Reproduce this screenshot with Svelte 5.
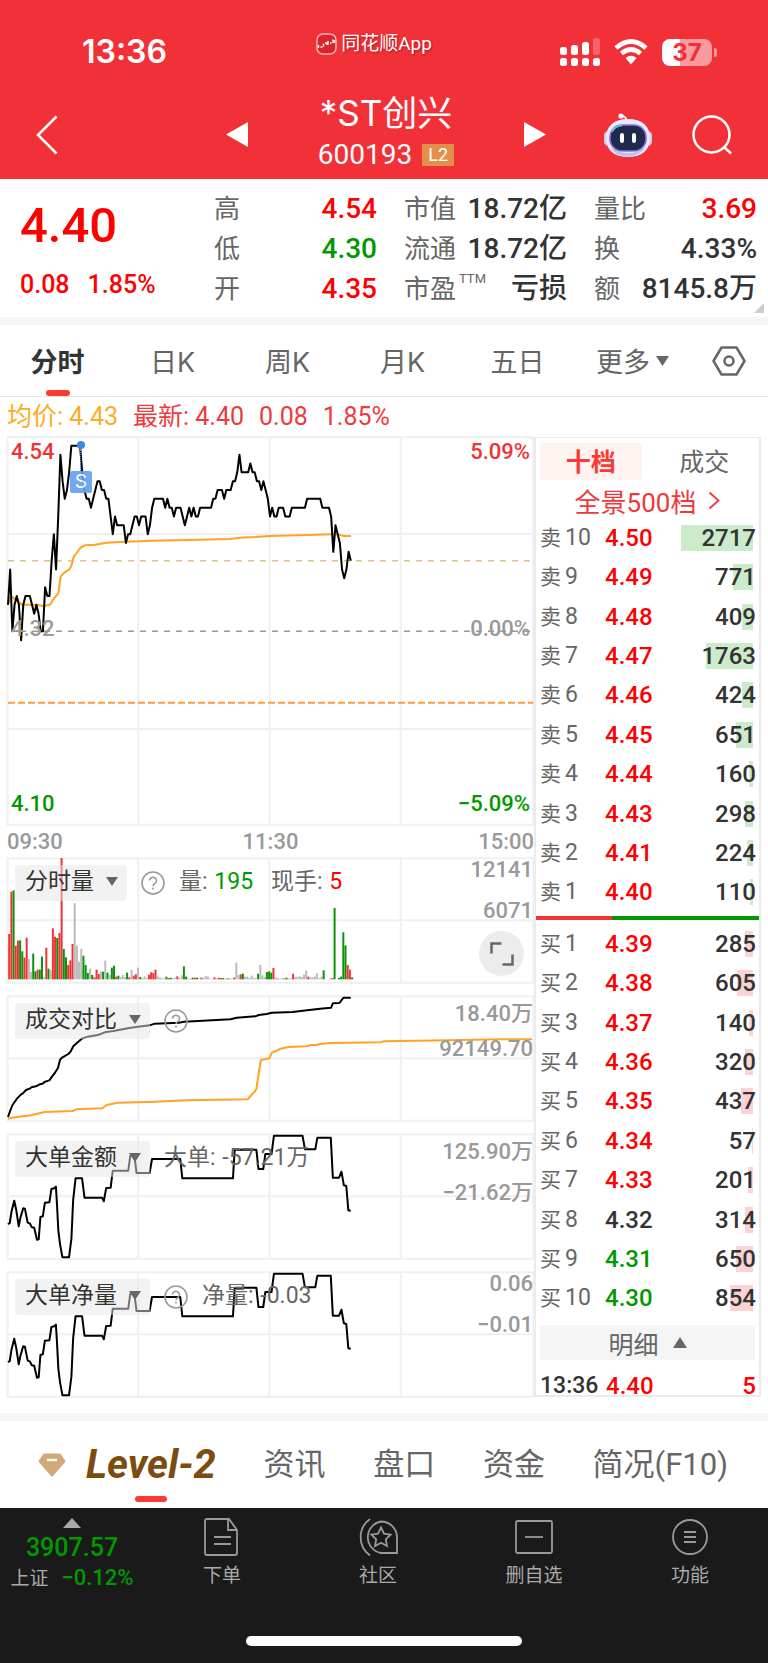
<script>
  const stats = [
    [
      { label: '高', value: '4.54', tone: 'up' },
      { label: '低', value: '4.30', tone: 'down' },
      { label: '开', value: '4.35', tone: 'up' }
    ],
    [
      { label: '市值', value: '18.72亿' },
      { label: '流通', value: '18.72亿' },
      { label: '市盈', sup: 'TTM', value: '亏损' }
    ],
    [
      { label: '量比', value: '3.69', tone: 'up' },
      { label: '换', value: '4.33%' },
      { label: '额', value: '8145.8万' }
    ]
  ];

  const periods = ['分时', '日K', '周K', '月K', '五日'];

  const asks = [
    ['10', '4.50', 2717], ['9', '4.49', 771], ['8', '4.48', 409], ['7', '4.47', 1763],
    ['6', '4.46', 424], ['5', '4.45', 651], ['4', '4.44', 160], ['3', '4.43', 298],
    ['2', '4.41', 224], ['1', '4.40', 110]
  ];
  const bids = [
    ['1', '4.39', 285], ['2', '4.38', 605], ['3', '4.37', 140], ['4', '4.36', 320],
    ['5', '4.35', 437], ['6', '4.34', 57], ['7', '4.33', 201], ['8', '4.32', 314],
    ['9', '4.31', 650], ['10', '4.30', 854]
  ];
  const previousClose = 4.32;
  const largest = 2717;
  const toneOf = (price) =>
    Number(price) > previousClose ? 'up' : Number(price) < previousClose ? 'down' : '';

  // Minute index and price in cents above 4.00.
  const priceTicks =
    '0,35 1,39 2,32 3,35 4,36 5,35 6,31 7,35 8,36 10,36 11,35 12,34 13,35 14,34 15,32 16,32 17,37 18,36 19,36 20,40 21,43 22,39 23,45 24,52 25,49 26,47 27,48 28,50 29,53 33,53 34,50 35,48 36,47 37,47 38,46 39,47 40,48 41,49 42,49 43,48 44,48 45,47 46,47 47,45 48,43 49,45 50,44 53,44 54,42 55,43 56,43 57,44 58,45 59,45 60,44 61,45 63,45 64,43 65,44 66,46 67,47 71,47 72,46 73,47 74,46 75,46 76,45 77,46 79,46 80,45 81,44 82,45 83,46 84,45 85,46 86,45 87,45 88,46 93,46 94,47 95,47 96,48 98,48 99,47 100,48 102,48 103,49 104,49 105,50 106,52 107,50 110,50 111,51 112,50 113,50 114,49 115,49 116,48 117,49 118,48 119,47 120,45 121,46 122,45 123,45 124,46 126,46 127,45 129,45 130,46 136,46 137,47 143,47 144,46 147,46 148,45 149,41 150,44 151,43 152,42 153,39 154,38 155,39 156,41 157,40';
  const priceLine = priceTicks
    .split(' ')
    .map((pair) => {
      const [minute, cents] = pair.split(',').map(Number);
      return `${24 + minute * 6.55},${604 - (cents - 32) * 26.5}`;
    })
    .join(' ');

  const averageLine =
    '24,522 36,500 50,512 66,524 110,524 130,528 150,524 163,504 175,490 182,440 190,430 208,418 214,408 221,380 232,366 242,353 254,346 285,344 320,338 375,335 460,332 560,330 690,327 720,323 765,321 809,318 900,316 1000,313 1015,313 1030,318 1053,318';

  // Per-minute turnover: r = rising, g = falling, y = flat.
  const volumeBars =
    'r136 r263 g267 r101 r116 g117 g84 r65 r125 y61 y22 g77 g24 r29 g29 g68 y7 r95 g32 y27 r153 r128 g124 r139 r364 g91 g66 r43 r57 r106 y229 y101 y53 y92 g71 g43 g19 y32 g13 r6 r29 r16 y23 g23 y56 g20 y13 g35 g41 r8 g11 y7 y13 y7 g20 r6 y29 r11 r15 y35 g7 y4 y9 y5 r14 r21 r19 r29 y9 y6 y3 y3 g8 r4 g5 y3 y5 r9 y4 y12 g39 g8 y3 y2 g5 r5 g5 y2 r5 y5 y10 y8 y2 y2 r6 y3 r5 r4 g4 y2 g3 y3 y2 r5 y50 y13 r15 g17 y8 y8 y5 y11 y5 y3 g17 y43 y12 y7 g22 g24 g20 r34 y6 r2 y2 y3 r3 g5 y3 y3 r17 y7 y8 y9 y7 y14 y26 r8 y6 y6 y8 y18 y3 y8 g27 y0 y0 y3 r4 g214 y0 g4 g8 g141 g102 r43 r29 g6'
      .split(' ')
      .map((bar, i) => ({ kind: bar[0], height: Number(bar.slice(1)), x: 24.5 + i * 6.34 }));

  const totalToday =
    '24,800 30,782 37,764 50,745 62,732 67,729 76,719 87,715 92,711 105,708 116,702 124,700 132,694 144,690 150,681 161,666 169,653 175,628 182,621 199,611 206,603 214,587 224,578 238,565 255,559 285,554 305,546 330,542 380,532 435,525 450,520 520,517 535,514 590,511 670,507 688,502 742,498 752,494 775,491 790,487 850,485 880,481 930,475 962,472 967,459 986,458 998,442 1019,442';
  const totalYesterday =
    '24,805 35,802 90,795 130,785 212,782 222,777 298,774 310,764 342,757 450,754 545,750 720,747 728,737 740,724 745,716 758,629 783,624 790,607 808,599 815,595 838,590 890,588 905,584 920,584 930,581 960,578 1105,576 1115,573 1300,570 1450,567 1545,567';
  const largeOrders =
    '24,312 29,308 34,274 42,241 48,270 55,318 60,292 68,264 73,265 81,307 87,309 93,321 100,322 108,358 113,357 118,290 125,288 131,247 144,246 150,206 158,204 163,199 166,250 170,330 175,372 182,411 201,411 208,355 213,240 220,174 239,174 246,232 297,232 302,243 309,203 322,202 328,151 373,151 379,106 391,107 397,158 435,158 442,116 524,116 530,174 677,174 682,88 745,88 751,146 765,146 771,101 789,101 796,46 879,46 886,87 916,87 922,52 961,52 967,172 985,172 992,154 999,195 1006,197 1012,270 1019,271';

  const panels = [
    {
      name: '分时量', help: true, origin: 25, kind: 'volume', axis: ['12141', '6071'],
      readings: [{ label: '量:', value: '195', tone: 'down' }, { label: '现手:', value: '5', tone: 'up' }]
    },
    { name: '成交对比', help: true, origin: 437, kind: 'compare', axis: ['18.40万', '92149.70'], readings: [] },
    {
      name: '大单金额', help: false, origin: 41, kind: 'orders', axis: ['125.90万', '−21.62万'],
      readings: [{ label: '大单:', value: '-57.21万' }]
    },
    {
      name: '大单净量', help: true, origin: 41, kind: 'orders', axis: ['0.06', '−0.01'],
      readings: [{ label: '净量:', value: '-0.03' }]
    }
  ];
</script>

{#snippet rows(side, levels, barClass)}
  <table aria-label={side}>
    <tbody>
      {#each levels as [level, price, size]}
        <tr>
          <th scope="row"><span>{side}</span>{level}</th>
          <td class="price {toneOf(price)}">{price}</td>
          <td class="size">
            <i class={barClass} style="width: {(size / largest) * 72}%"></i>
            <b>{size}</b>
          </td>
        </tr>
      {/each}
    </tbody>
  </table>
{/snippet}

<div class="app">
  <header>
    <div class="status">
      <div class="clock">13:36</div>
      <div class="source">
        <svg width="21" height="22" viewBox="0 0 21 22" aria-hidden="true">
          <rect x="1" y="1" width="19" height="20" rx="6" fill="#d9252b" stroke="#fff" stroke-opacity=".65" stroke-width="1.5" />
          <path d="M2.5 12v3M4.5 14h2M7.5 10.500v3M9 10h2v2M12 8v4M14 10h1.500M17 6.500v3.500M18.500 7v3" stroke="#fff" stroke-width="1.400" fill="none" />
        </svg>
        <span>同花顺App</span>
      </div>
      <div class="signals">
        <svg width="40" height="28" viewBox="0 0 40 28" fill="#fff" aria-hidden="true">
          <rect x="0" y="9" width="7" height="8" rx="2.500" />
          <rect x="11" y="7" width="7" height="10" rx="2.500" />
          <rect x="22" y="4" width="7" height="13" rx="2.500" />
          <rect x="33" y="0" width="7" height="17" rx="2.500" opacity=".25" />
          <rect x="0" y="20" width="7" height="8" rx="2.500" />
          <rect x="11" y="20" width="7" height="8" rx="2.500" />
          <rect x="22" y="20" width="7" height="8" rx="2.500" />
          <rect x="33" y="20" width="7" height="8" rx="2.500" />
        </svg>
        <svg width="34" height="26" viewBox="0 0 34 26" aria-hidden="true">
          <path d="M2 9Q17-4 32 9M7.500 14.500Q17 6.500 26.500 14.500" fill="none" stroke="#fff" stroke-width="4.600" />
          <path d="M11.500 19Q17 14.500 22.500 19L17 25.500Z" fill="#fff" />
        </svg>
        <div class="battery"><span>37</span></div>
      </div>
    </div>
    <div class="titlebar">
      <button class="back" aria-label="返回">
        <svg width="22" height="40" viewBox="0 0 22 40"><path d="M20.500 1.500L2 20l18.500 18.500" fill="none" stroke="#fff" stroke-width="2.500" /></svg>
      </button>
      <button class="prev" aria-label="上一只">
        <svg width="22" height="25" viewBox="0 0 22 25"><path d="M22 0v25L0 12.500Z" fill="#fff" /></svg>
      </button>
      <div class="name">
        <h1>*ST创兴</h1>
        <div class="code">600193<span>L2</span></div>
      </div>
      <button class="next" aria-label="下一只">
        <svg width="22" height="25" viewBox="0 0 22 25"><path d="M0 0v25l22-12.500Z" fill="#fff" /></svg>
      </button>
      <div class="tools">
        <button aria-label="智能助手">
          <svg width="48" height="44" viewBox="0 0 48 44">
            <path d="M22 8Q23 3 17 3" fill="none" stroke="#e4e4ff" stroke-width="2" />
            <circle cx="17" cy="3" r="2.600" fill="#f3f3ff" />
            <rect x="0" y="18" width="9" height="15" rx="4.500" fill="#c9cdf4" />
            <rect x="39" y="18" width="9" height="15" rx="4.500" fill="#c9cdf4" />
            <path d="M24 6C38 6 46 13 46 25S38 44 24 44 2 37 2 25 10 6 24 6Z" fill="#e9ebfc" />
            <path d="M6 34Q24 46 42 34Q36 43 24 43.500T6 34Z" fill="#bcc4ee" />
            <rect x="6" y="12" width="36" height="26" rx="12" fill="#202b4b" stroke="#8f6ee8" stroke-width="1.600" />
            <path d="M8 19Q11 13 18 12.500" fill="none" stroke="#55d4e6" stroke-width="1.500" />
            <rect x="16" y="20" width="4" height="10" rx="2" fill="#fff" />
            <rect x="28" y="20" width="4" height="10" rx="2" fill="#fff" />
          </svg>
        </button>
        <button aria-label="搜索">
          <svg width="40" height="40" viewBox="0 0 40 40" fill="none" stroke="#fff" stroke-width="2.500">
            <circle cx="19.500" cy="19.500" r="18" /><path d="M32 32l7 6.500" />
          </svg>
        </button>
      </div>
    </div>
  </header>

  <section class="quote" aria-label="行情">
    <div class="last up">
      <strong>4.40</strong>
      <div><span>0.08</span><span>1.85%</span></div>
    </div>
    {#each stats as column}
      <dl>
        {#each column as item}
          <div>
            <dt>{item.label}{#if item.sup}<sup>{item.sup}</sup>{/if}</dt>
            <dd class={item.tone}>{item.value}</dd>
          </div>
        {/each}
      </dl>
    {/each}
    <i class="corner"></i>
  </section>

  <nav class="periods" aria-label="周期">
    {#each periods as period, i}
      <button class:active={i === 0}>{period}</button>
    {/each}
    <button>更多<svg width="13" height="10" viewBox="0 0 13 10"><path d="M0 0h13L6.500 10Z" fill="#666" /></svg></button>
    <button aria-label="设置">
      <svg width="34" height="30" viewBox="0 0 34 30" fill="none" stroke="#666" stroke-width="2.500">
        <path d="M9.500 1.500h15L32.500 15l-8 13.500h-15L1.500 15Z" stroke-linejoin="round" /><circle cx="17" cy="15" r="4.500" />
      </svg>
    </button>
  </nav>

  <main>
    <p class="summary"><span class="avg">均价: 4.43</span><span>最新: 4.40</span><span>0.08</span><span>1.85%</span></p>
    <div class="board">
      <div class="charts">
        <div class="chart main-chart">
          <svg viewBox="21 21 1581 1164" preserveAspectRatio="none" aria-hidden="true">
            <path class="grid" d="M23 22H1599V1184H23ZM415 22V1184M809 22V1184M1202 22V1184M23 312H1599M23 897H1599" />
            <path class="dash tan" d="M24 392H1600" />
            <path class="dash gray" d="M60 604H1600" />
            <path class="dash orange" d="M24 818H1600" />
            <polyline class="line amber" points={averageLine} />
            <polyline class="line" points={priceLine} />
          </svg>
          <div class="marker"><i></i><span>S</span></div>
          <span class="corner-label up tl">4.54</span>
          <span class="corner-label up tr">5.09%</span>
          <span class="corner-label mid ml">4.32</span>
          <span class="corner-label mid mr">0.00%</span>
          <span class="corner-label down bl">4.10</span>
          <span class="corner-label down br">−5.09%</span>
        </div>
        <div class="times"><span>09:30</span><span>11:30</span><span>15:00</span></div>

        <div class="panels">
          {#each panels as panel}
            <section class="chart panel" aria-label={panel.name}>
              <svg class="plot" viewBox="21 {panel.origin} 1530 375" preserveAspectRatio="none" aria-hidden="true">
                <path class="grid" transform="translate(0 {panel.origin})" d="M23 1H1549V374H23ZM402 1V374M783 1V374M1164 1V374M23 187H1549" />
                {#if panel.kind === 'volume'}
                  {#each volumeBars as bar}
                    <rect class="bar-{bar.kind}" x={bar.x} y={389 - bar.height} width="5.800" height={bar.height} />
                  {/each}
                {:else if panel.kind === 'compare'}
                  <polyline class="line amber" points={totalYesterday} />
                  <polyline class="line" points={totalToday} />
                {:else}
                  <polyline class="line" points={largeOrders} />
                {/if}
              </svg>
              <div class="panel-head">
                <button class="pick">{panel.name}<svg width="12" height="9" viewBox="0 0 12 9"><path d="M0 0h12L6 9Z" fill="#666" /></svg></button>
                {#if panel.help}
                  <button class="help" aria-label="说明">
                    <svg width="24" height="24" viewBox="0 0 24 24" fill="none" stroke="#999" stroke-width="1.600">
                      <circle cx="12" cy="12" r="11" />
                      <path d="M8.500 9.500a3.500 3.300 0 1 1 5.500 2.800c-1.400.9-2 1.300-2 2.700" /><path d="M12 16.500v2" />
                    </svg>
                  </button>
                {/if}
                {#each panel.readings as r}
                  <span class="reading">{r.label} <b class={r.tone}>{r.value}</b></span>
                {/each}
              </div>
              <div class="axis" class:tall={panel.axis[0].endsWith('万')}>
                {#each panel.axis as tick}<span class:wan={tick.endsWith('万')}>{tick}</span>{/each}
              </div>
              {#if panel.kind === 'volume'}
                <button class="expand" aria-label="全屏">
                  <svg width="24" height="24" viewBox="0 0 24 24" fill="none" stroke="#666" stroke-width="2.500"><path d="M1.500 11.500v-10h10M22.500 12.500v10h-10" /></svg>
                </button>
              {/if}
            </section>
          {/each}
        </div>
      </div>

      <aside class="book" aria-label="盘口">
        <div class="book-tabs"><button class="active">十档</button><button>成交</button></div>
        <a class="full" href="#depth">全景500档<svg width="12" height="19" viewBox="0 0 12 19"><path d="M1.500 1.500l9 8-9 8" fill="none" stroke="#f0373a" stroke-width="1.800" /></svg></a>
        {@render rows('卖', asks, 'ask')}
        <div class="ratio"><i></i></div>
        {@render rows('买', bids, 'bid')}
        <button class="detail">明细<svg width="14" height="11" viewBox="0 0 14 11"><path d="M0 11h14L7 0Z" fill="#666" /></svg></button>
        <div class="trade"><span>13:36</span><b class="up">4.40</b><b class="up">5</b></div>
      </aside>
    </div>
  </main>

  <nav class="sections" aria-label="栏目">
    <button class="level">
      <svg width="28" height="24" viewBox="0 0 28 24" aria-hidden="true">
        <path d="M7 .5h14q1 0 1.700.8L27 7.200q.8 1.100 0 2.100L15 23q-1 1-2 0L1 9.300q-.8-1 0-2.100L5.300 1.300Q6 .5 7 .5Z" fill="#cfa978" />
        <path d="M9 7h10" stroke="#fff" stroke-width="2.400" />
      </svg>
      <span>Level-2</span>
    </button>
    <button>资讯</button>
    <button>盘口</button>
    <button>资金</button>
    <button>简况(F10)</button>
  </nav>

  <footer>
    <div class="actions">
      <button class="index">
        <svg width="18" height="10" viewBox="0 0 18 10" aria-hidden="true"><path d="M0 10h18L9 0Z" fill="#aaa" /></svg>
        <strong>3907.57</strong>
        <span>上证 <em>−0.12%</em></span>
      </button>
      <button>
        <svg width="40" height="38" viewBox="0 0 40 38" aria-hidden="true"><path d="M5 1h22l8 11v23q0 2-2 2H5q-2 0-2-2V3q0-2 2-2ZM26 1v11h9M12 19h17M12 26h17" /></svg>
        下单
      </button>
      <button>
        <svg width="40" height="38" viewBox="0 0 40 38" aria-hidden="true">
          <path d="M23 3.500a16 16 0 0 1 16 16V35H23a16 16 0 0 1 0-31.500ZM12 1a22.500 22.500 0 0 0 0 36.500" />
          <path d="M23 9.500l3 6.200 6.600.9-4.800 4.700 1.200 6.700-6-3.200-6 3.200 1.200-6.700-4.800-4.700 6.600-.9Z" />
        </svg>
        社区
      </button>
      <button>
        <svg width="40" height="38" viewBox="0 0 40 38" aria-hidden="true"><rect x="2" y="3" width="36" height="32" rx="1.500" /><path d="M11 19h18" /></svg>
        删自选
      </button>
      <button>
        <svg width="40" height="38" viewBox="0 0 40 38" aria-hidden="true"><circle cx="20" cy="19" r="17" /><path d="M14 14h12M14 19h12M14 24h12" /></svg>
        功能
      </button>
    </div>
    <div class="home"></div>
  </footer>
</div>

<style>
  :global(body) { margin: 0; background: #fff; }
  .app {
    font-family: Roboto, "Noto Sans CJK SC", sans-serif;
    color: #333;
    background: #fff;
  }
  .app, .app * { box-sizing: border-box; }
  button {
    font: inherit; color: inherit; background: none; border: 0; padding: 0; margin: 0;
    display: flex; align-items: center; justify-content: center; cursor: pointer;
  }
  svg { display: block; flex: none; }
  i, em { font-style: normal; }
  .up { color: #f00; }
  .down { color: #009900; }

  header { background: #f23038; color: #fff; padding-top: 32px; }
  .status {
    display: grid; grid-template-columns: 1fr auto 1fr; align-items: center;
    height: 40px; padding: 0 56px 0 82px;
  }
  .clock { font: 600 32px/40px Inter, sans-serif; }
  .source {
    display: flex; align-items: center; gap: 4px; align-self: start; margin-right: 46px;
    font: 19px/24px Roboto, "Noto Sans CJK SC", sans-serif; text-shadow: 1px 1px 2px #7008;
  }
  .signals { display: flex; align-items: center; justify-content: flex-end; gap: 14px; }
  .battery {
    position: relative; width: 50px; height: 27px; border-radius: 8px; display: grid; place-items: center;
    background: linear-gradient(90deg, #fff 37%, #f99a9e 37%);
    font: 700 24px/27px Inter, sans-serif; color: #f23038;
  }
  .battery::after {
    content: ""; position: absolute; right: -5px; top: 9px; width: 3px; height: 9px;
    border-radius: 0 3px 3px 0; background: #f99a9e;
  }
  .titlebar {
    display: grid; grid-template-columns: 190fr 22px 276fr 22px 222fr;
    align-items: center; padding: 0 0 0 36px; height: 107px;
  }
  .titlebar > button { margin-top: 18px; }
  .back { justify-content: flex-start; }
  .name { text-align: center; padding-top: 14px; }
  h1 { margin: 0; font: 35px/44px Inter, "Noto Sans CJK SC", sans-serif; }
  .code { display: flex; align-items: center; justify-content: center; gap: 10px; font: 28px/40px Roboto, sans-serif; }
  .code span { background: #e2904a; font-size: 18px; line-height: 22px; width: 32px; }
  .tools { display: flex; align-items: center; justify-content: flex-end; gap: 40px; padding-right: 36px; margin-top: 18px; }

  .quote {
    position: relative; display: grid; grid-template-columns: 167fr 163fr 163fr 163fr; column-gap: 27px;
    padding: 10px 11px 8px 20px; border-bottom: 8px solid #f5f5f5;
  }
  .last { display: flex; flex-direction: column; white-space: nowrap; font-weight: 500; }
  .last strong { font-size: 49px; line-height: 74px; font-weight: 500; }
  .last div { display: flex; gap: 18px; font-size: 25px; line-height: 44px; }
  dl { margin: 0; }
  dl div { display: flex; justify-content: space-between; height: 40px; line-height: 40px; white-space: nowrap; }
  dt { font-size: 26px; color: #666; display: flex; }
  sup { font-size: 13px; line-height: 16px; margin: 2px 0 0 3px; }
  dd { margin: 0; font-size: 28px; font-weight: 500; }
  .corner { position: absolute; right: 4px; bottom: 4px; border: 5px solid transparent; border-right-color: #ccc; border-bottom-color: #ccc; }

  .periods {
    display: grid; grid-template-columns: repeat(6, 115fr) 78fr;
    height: 72px; border-bottom: 1px solid #e8e8e8; color: #666; font-size: 27px;
    font-family: Inter, "Noto Sans CJK SC", sans-serif;
  }
  .periods button { position: relative; gap: 6px; }
  .periods .active { color: #333; font-weight: 700; }
  .periods .active::after, .level span::after {
    content: ""; position: absolute; left: 50%; bottom: 0; height: 6px; width: 24px;
    transform: translateX(-50%); border-radius: 3px; background: #fb3b32;
  }

  main { padding: 0 7px 16px; border-bottom: 8px solid #f5f5f5; }
  .summary { display: flex; gap: 15px; margin: 0; font-size: 25px; line-height: 40px; color: #ee3a3e; }
  .summary .avg { color: #fdac26; }
  .board { display: grid; grid-template-columns: 527fr 227fr; }
  .charts { min-width: 0; }
  .chart { position: relative; }
  .chart > svg { width: 100%; height: 100%; overflow: visible; }
  .main-chart { height: 388px; }
  .grid { fill: none; stroke: #f0f0f0; stroke-width: 2; vector-effect: non-scaling-stroke; }
  .line { fill: none; stroke: #000; stroke-width: 2; stroke-linejoin: round; vector-effect: non-scaling-stroke; }
  .amber { stroke: #ffa422; }
  .dash { fill: none; stroke-dasharray: 6 6; stroke-width: 1.500; vector-effect: non-scaling-stroke; }
  .tan { stroke: #dfc090; }
  .gray { stroke: #999; }
  .orange { stroke: #ff9a3c; stroke-width: 2; stroke-dasharray: 7 3; }
  .bar-r { fill: #ee3336; }
  .bar-g { fill: #0a930a; }
  .bar-y { fill: #bbb; }

  .corner-label { position: absolute; font-size: 22px; line-height: 28px; font-weight: 500; }
  .corner-label.up { color: #ee3336; }
  .mid { color: #999; top: 50%; transform: translateY(-50%); margin-top: -2px; }
  .tl, .tr { top: 1px; }
  .bl, .br { bottom: 7px; }
  .tl, .ml, .bl { left: 4px; }
  .tr, .mr, .br { right: 4px; }
  .marker { position: absolute; left: 14%; top: 1%; transform: translateX(-50%); display: flex; flex-direction: column; align-items: center; }
  .marker i { width: 8px; height: 8px; border-radius: 50%; background: #4089e0; }
  .marker::before { content: ""; position: absolute; top: 8px; height: 22px; border-left: 1px dotted #4089e0; }
  .marker span {
    margin-top: 22px; width: 22px; height: 22px; border-radius: 2px; background: #62a0ee; opacity: .9; color: #fff;
    font: 19px/22px Inter, sans-serif; text-align: center;
  }
  .times { display: flex; justify-content: space-between; font-size: 22px; line-height: 33px; font-weight: 500; color: #999; }

  .panels { display: grid; gap: 13px; }
  .panel { height: 125px; }
  .panel-head {
    position: absolute; inset: 7px auto auto 8px; display: flex; align-items: center; gap: 14px;
    height: 36px; font-size: 23px; line-height: 32px; padding-bottom: 1px; color: #666; white-space: nowrap;
  }
  .pick { height: 36px; padding: 0 9px 2px 10px; gap: 12px; border-radius: 4px; background: rgba(229, 229, 229, .5); color: #333; }
  .reading { margin-right: 4px; padding-bottom: 2px; }
  .reading b { font-weight: 400; margin-left: 1px; }
  .axis {
    position: absolute; top: 0; right: 1px; display: flex; flex-direction: column; gap: 17px; text-align: right;
    font-size: 22px; line-height: 24px; font-weight: 500; color: #999;
  }
  .axis .wan { line-height: 36px; }
  .axis.tall { gap: 5px; }
  .expand { position: absolute; right: 10px; bottom: 7px; width: 45px; height: 45px; border-radius: 50%; background: #ececec; }

  .book {
    display: flex; flex-direction: column; border: 2px solid #ebebeb; border-width: 1px 2px 2px;
    padding: 5px 0 0; min-width: 0;
  }
  .book-tabs { display: grid; grid-template-columns: 1fr 1fr; gap: 12px; padding: 0 4px; font-size: 25px; color: #666; }
  .book-tabs button { height: 37px; padding-bottom: 3px; }
  .book-tabs .active { background: #fff3f2; color: #fb3b32; font-weight: 700; border-radius: 4px; }
  .full {
    display: flex; align-items: center; justify-content: center; gap: 12px; height: 38px; padding-top: 2px;
    color: #f0373a; text-decoration: none; font-size: 26px;
  }
  table { flex: 1; display: flex; flex-direction: column; padding: 0 4px; }
  tbody { flex: 1; display: flex; flex-direction: column; }
  tr, .trade { display: grid; grid-template-columns: 65px 1fr 100px; align-items: center; }
  tr { flex: 1; }
  th { display: flex; align-items: center; gap: 4px; padding: 0; font-weight: 400; font-size: 23px; line-height: 26px; color: #666; }
  th span { font-size: 21px; }
  td { padding: 0; }
  .price, .size, .trade { font-size: 24px; line-height: 26px; font-weight: 500; }
  .size { position: relative; text-align: right; }
  .size i { position: absolute; top: 0; bottom: 0; right: 2px; }
  .size b, .trade b { position: relative; font-weight: 500; left: 1px; }
  .ask { background: #cbebcb; }
  .bid { background: #fbd3d4; }
  .ratio { height: 4px; margin: 4px 0; background: #009900; }
  .ratio i { display: block; width: 34%; height: 4px; background: #f03338; }
  .detail { height: 35px; margin: 7px 4px; background: #f5f5f5; color: #666; font-size: 25px; gap: 14px; }
  .trade { height: 28px; padding: 6px 4px 0; font-size: 23px; }
  .trade b { font-size: 24px; }
  .trade b:last-child { text-align: right; }

  .sections {
    display: flex; justify-content: space-between; height: 87px; padding: 0 40px 0 38px;
    font: 31px/87px Roboto, "Noto Sans CJK SC", sans-serif; color: #666;
  }
  .level { gap: 20px; }
  .level span { position: relative; font: italic 700 40px/87px Roboto, sans-serif; color: #7c4b0e; }
  .level span::after { width: 32px; bottom: 6px; }

  footer { background: #1a1a1a; color: #aaa; padding-bottom: 17px; }
  .actions { display: grid; grid-template-columns: 144fr 156fr 156fr 156fr 156fr; height: 128px; align-items: start; }
  .actions button { flex-direction: column; font-size: 19px; line-height: 30px; padding-top: 10px; gap: 5px; }
  .actions button > svg { fill: none; stroke: #999; stroke-width: 1.800; }
  .actions .index { gap: 0; white-space: nowrap; }
  .actions .index > svg { stroke: none; }
  .index strong { font-size: 25px; line-height: 40px; font-weight: 500; color: #009900; }
  .index span { line-height: 20px; }
  .index em { font-size: 22px; font-weight: 500; color: #009900; margin-left: 8px; }
  .home { width: 36%; height: 10px; margin: 0 auto; border-radius: 5px; background: #fff; }
</style>
